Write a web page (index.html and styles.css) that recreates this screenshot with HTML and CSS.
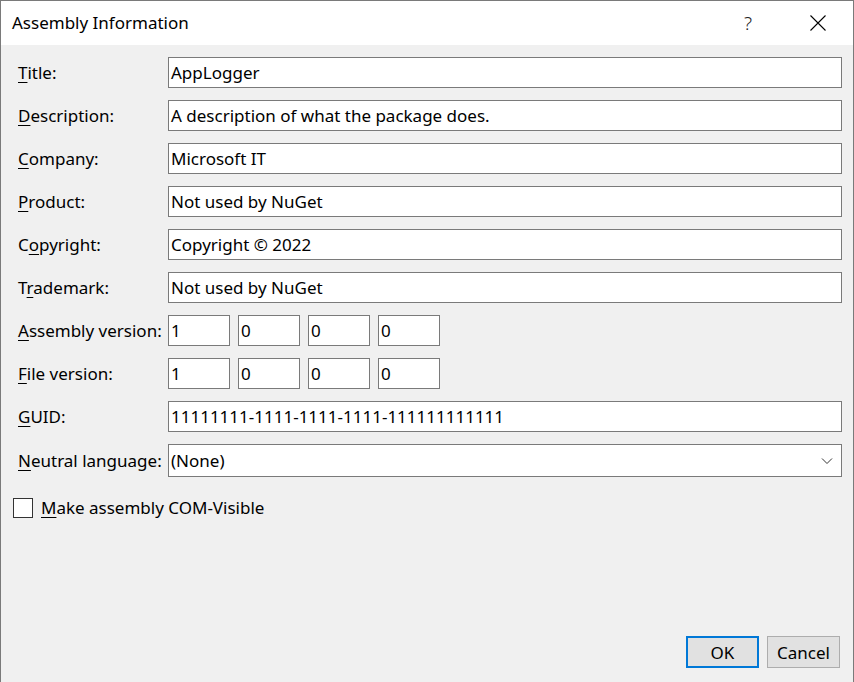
FILE: index.html
```html
<!DOCTYPE html>
<html>
<head>
<meta charset="utf-8">
<link rel="stylesheet" href="styles.css">
</head>
<body>
<div class="window">
  <div class="titlebar">
    <span class="title">Assembly Information</span>
    <span class="help">?</span>
    <span class="close">
      <svg width="16" height="16" viewBox="0 0 16 16"><path d="M0.5 0.5 L15.5 15.5 M15.5 0.5 L0.5 15.5" stroke="#000" stroke-width="1.1" fill="none"/></svg>
    </span>
  </div>
  <div class="content">
    <div class="form">
      <label class="lbl"><u>T</u>itle:</label>
      <div class="field">AppLogger</div>
      <label class="lbl"><u>D</u>escription:</label>
      <div class="field">A description of what the package does.</div>
      <label class="lbl"><u>C</u>ompany:</label>
      <div class="field">Microsoft IT</div>
      <label class="lbl"><u>P</u>roduct:</label>
      <div class="field">Not used by NuGet</div>
      <label class="lbl">C<u>o</u>pyright:</label>
      <div class="field">Copyright © 2022</div>
      <label class="lbl">T<u>r</u>ademark:</label>
      <div class="field">Not used by NuGet</div>
      <label class="lbl"><u>A</u>ssembly version:</label>
      <div class="versions">
        <div class="field ver">1</div>
        <div class="field ver">0</div>
        <div class="field ver">0</div>
        <div class="field ver">0</div>
      </div>
      <label class="lbl"><u>F</u>ile version:</label>
      <div class="versions">
        <div class="field ver">1</div>
        <div class="field ver">0</div>
        <div class="field ver">0</div>
        <div class="field ver">0</div>
      </div>
      <label class="lbl"><u>G</u>UID:</label>
      <div class="field">11111111-1111-1111-1111-111111111111</div>
      <label class="lbl"><u>N</u>eutral language:</label>
      <div class="field select">
        <span>(None)</span>
        <svg width="12" height="8" viewBox="0 0 12 8"><path d="M1 1.5 L6 6.5 L11 1.5" stroke="#333" stroke-width="1" fill="none"/></svg>
      </div>
    </div>
    <div class="check">
      <span class="box"></span>
      <span class="check-label"><u>M</u>ake assembly COM-Visible</span>
    </div>
    <div class="spacer"></div>
    <div class="buttons">
      <button class="btn default">OK</button>
      <button class="btn">Cancel</button>
    </div>
  </div>
</div>
</body>
</html>
```
FILE: styles.css
```css
* { box-sizing: border-box; }
html, body {
  margin: 0;
  padding: 0;
  height: 100%;
}
body {
  font-family: "Noto Sans", "Open Sans", sans-serif;
  font-size: 17px;
  color: #000;
  background: #f0f0f0;
}
.window {
  height: 682px;
  border: 1px solid #7a7a7a;
  border-bottom: none;
  display: flex;
  flex-direction: column;
  background: #f0f0f0;
}
.titlebar {
  height: 44px;
  background: #fff;
  display: flex;
  align-items: center;
  padding-left: 11px;
  flex-shrink: 0;
}
.title {
  flex: 1;
  font-size: 17px;
  padding-bottom: 1px;
}
.help {
  font-size: 19px;
  color: #222;
  margin-right: 58px;
  font-weight: 300;
}
.close {
  display: flex;
  margin-right: 27px;
}
.content {
  flex: 1;
  display: flex;
  flex-direction: column;
  padding: 12px 13px 14px 12px;
}
.form {
  display: grid;
  grid-template-columns: 155px 1fr;
  row-gap: 12px;
  align-items: center;
  margin-right: -2px;
}
.lbl {
  padding-left: 5px;
  white-space: nowrap;
}
u { text-decoration-thickness: 1px; text-underline-offset: 3px; }
.field {
  height: 31px;
  background: #fff;
  border: 1px solid #7a7a7a;
  padding: 0 2px;
  display: flex;
  align-items: center;
  white-space: nowrap;
}
.versions {
  display: flex;
  gap: 8px;
}
.ver {
  width: 62px;
}
.select {
  height: 33px;
  justify-content: space-between;
  padding-right: 8px;
}
.check {
  display: flex;
  align-items: center;
  margin-top: 19px;
  gap: 8px;
}
.box {
  width: 20px;
  height: 20px;
  border: 1px solid #333;
  background: #fff;
}
.spacer { flex: 1; }
.buttons {
  display: flex;
  justify-content: flex-end;
  gap: 8px;
}
.btn {
  width: 73px;
  height: 32px;
  font: inherit;
  font-size: 17px;
  background: #e1e1e1;
  border: 1px solid #adadad;
  color: #000;
  padding: 0;
}
.btn.default {
  border: 2px solid #0078d7;
}
```
